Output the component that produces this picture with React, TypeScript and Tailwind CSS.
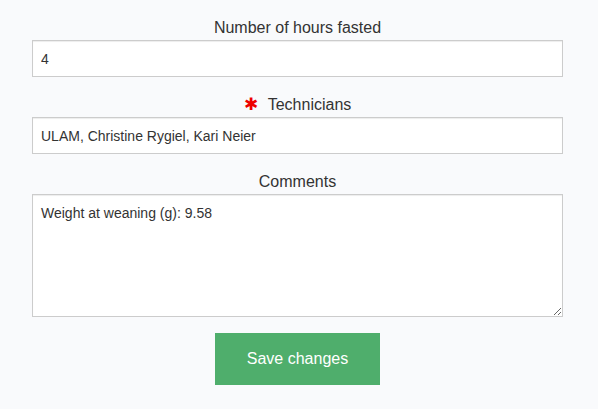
import React from 'react';

const inputCls =
  'block w-full h-[37px] border border-[#cccccc] bg-white px-[8px] text-[14px] text-[#333333] shadow-[inset_0_1px_1px_rgba(0,0,0,0.075)] outline-none';

const labelCls = 'block text-center text-[16px] leading-[20px] text-[#333333] mb-[2px]';

export default function App() {
  return (
    <div className="min-h-[409px] w-full bg-[#f9fafc] pl-[32px] pr-[35px] pt-[18px] font-['Liberation_Sans',Arial,sans-serif]">
      {/* Hours fasted */}
      <div>
        <label className={labelCls}>Number of hours fasted</label>
        <input className={inputCls} defaultValue="4" readOnly />
      </div>

      {/* Technicians */}
      <div className="mt-[18px]">
        <label className={labelCls}>
          <span className="mr-[10px] text-[17px] text-[#ee0000]">✱</span>
          Technicians
        </label>
        <input className={inputCls} defaultValue="ULAM, Christine Rygiel, Kari Neier" readOnly />
      </div>

      {/* Comments */}
      <div className="mt-[18px]">
        <label className={labelCls}>Comments</label>
        <textarea
          className="block w-full h-[123px] resize-y border border-[#cccccc] bg-white px-[8px] py-[10px] text-[14px] leading-[16px] text-[#333333] shadow-[inset_0_1px_1px_rgba(0,0,0,0.075)] outline-none"
          defaultValue="Weight at weaning (g): 9.58"
          readOnly
        />
      </div>

      <div className="mt-[16px] flex justify-center">
        <button className="h-[52px] w-[165px] bg-[#4fae6c] text-[16px] text-white">Save changes</button>
      </div>
    </div>
  );
}
